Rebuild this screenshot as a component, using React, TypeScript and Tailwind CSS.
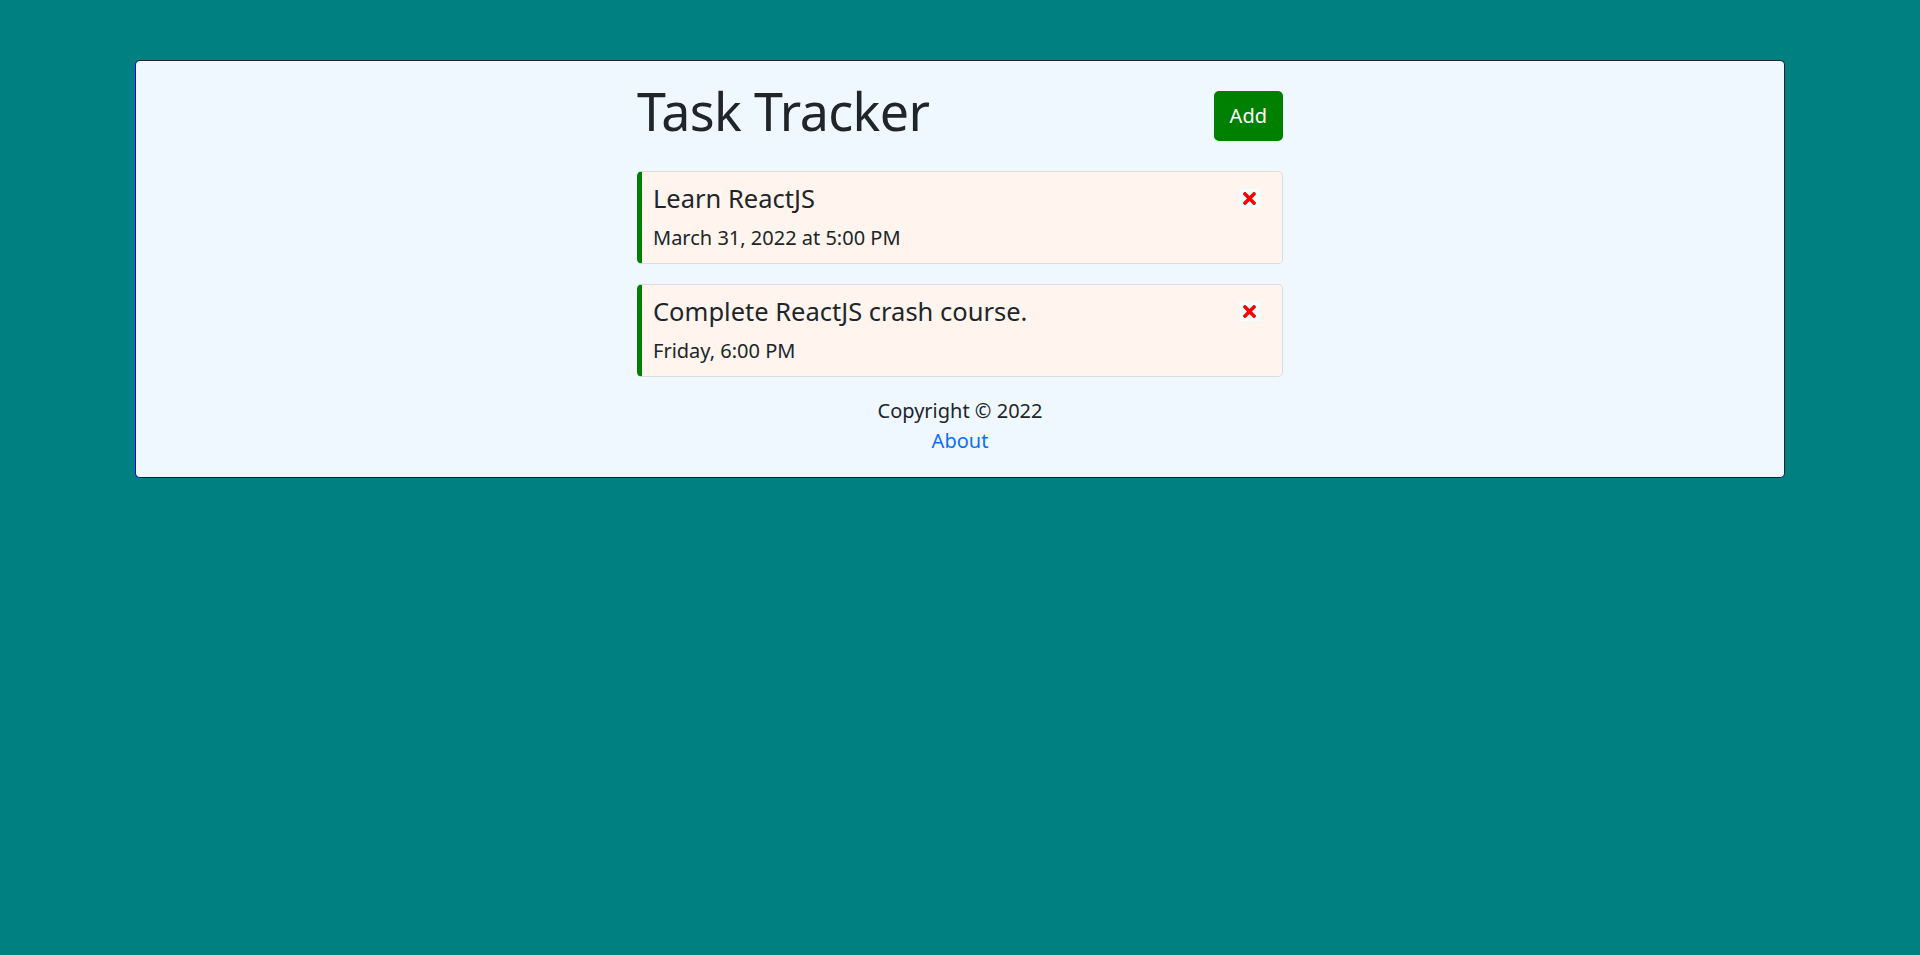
import { FaTimes } from "react-icons/fa";

type Task = { id: number; text: string; day: string };

const tasks: Task[] = [
  { id: 1, text: "Learn ReactJS", day: "March 31, 2022 at 5:00 PM" },
  { id: 2, text: "Complete ReactJS crash course.", day: "Friday, 6:00 PM" },
];

const TaskItem = ({ task }: { task: Task }) => {
  return (
    <div className="bg-[#fff5ee] border border-[#dcdcdc] border-l-[5px] border-l-[#008000] rounded-[5px] pl-[11px] pr-[12px] pt-[8px] pb-[10px]">
      <div className="flex justify-between items-center">
        <h3 className="text-[25.5px] leading-[36px]">{task.text}</h3>
        <span className="mr-[11px] w-[19px] h-[19px] flex items-center justify-center bg-[#f0ffff] text-[#ff0000] cursor-pointer">
          <FaTimes size={19} />
        </span>
      </div>
      <p className="text-[20px] leading-[30px] mt-[7px]">{task.day}</p>
    </div>
  );
};

const App = () => {
  return (
    <div
      className="min-h-screen bg-[#008080] pt-[60px] text-[#212529]"
      style={{ fontFamily: '"Noto Sans", "Open Sans", sans-serif' }}
    >
      <div className="mx-[135px] bg-[#f0f8ff] rounded-[5px] border border-t-[#212529] border-r-[#212529] border-l-[#0000ff] border-b-[#0000ff] pt-[17px] pb-[21px]">
        <div className="w-[646px] mx-auto">
          {/* Header */}
          <header className="flex justify-between items-start">
            <h1 className="text-[52px] leading-[65px] font-normal tracking-[-0.6px]">Task Tracker</h1>
            <button className="mt-[13px] bg-[#008000] text-white text-[20px] leading-[30px] px-[16px] py-[10px] rounded-[5px]">
              Add
            </button>
          </header>

          {/* Tasks */}
          <div className="mt-[28px] flex flex-col gap-[20px]">
            {tasks.map((t) => (
              <TaskItem key={t.id} task={t} />
            ))}
          </div>

          {/* Footer */}
          <footer className="mt-[19px] text-center text-[20px] leading-[30px]">
            <p>Copyright &copy; 2022</p>
            <a href="#" className="text-[#0d6efd]">
              About
            </a>
          </footer>
        </div>
      </div>
    </div>
  );
};

export default App;
